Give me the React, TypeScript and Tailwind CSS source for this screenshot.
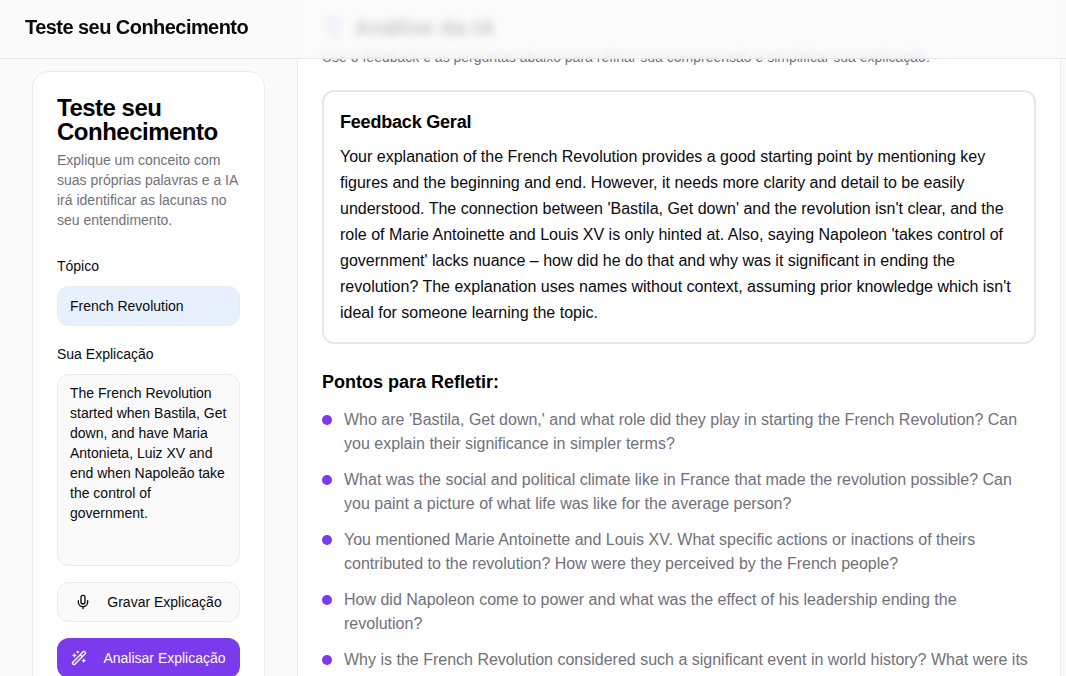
import { Lightbulb, Mic, WandSparkles } from "lucide-react";

const points = [
  "Who are 'Bastila, Get down,' and what role did they play in starting the French Revolution? Can you explain their significance in simpler terms?",
  "What was the social and political climate like in France that made the revolution possible? Can you paint a picture of what life was like for the average person?",
  "You mentioned Marie Antoinette and Louis XV. What specific actions or inactions of theirs contributed to the revolution? How were they perceived by the French people?",
  "How did Napoleon come to power and what was the effect of his leadership ending the revolution?",
  "Why is the French Revolution considered such a significant event in world history? What were its",
];

export default function App() {
  return (
    <div className="relative flex h-[676px] w-full overflow-hidden bg-[#fafafa] font-['Liberation_Sans',Arial,sans-serif] text-[#0a0a0f]">
      <header className="absolute inset-x-0 top-0 z-10 flex h-[59px] items-center border-b border-[#e8e8ea] bg-[#fafafa]/80 px-[25px] pb-[5px] backdrop-blur-[4px]">
        <h1 className="text-xl font-bold tracking-[-0.55px]">Teste seu Conhecimento</h1>
      </header>

      <aside className="w-[297px] shrink-0 pl-8 pr-8 pt-[71px]">
        <div className="h-[640px] rounded-2xl border border-[#ebebee] bg-white px-6 pt-6">
          <h2 className="text-2xl leading-6 font-bold tracking-[-0.5px] text-black">Teste seu Conhecimento</h2>
          <p className="mt-[6px] text-sm leading-5 text-[#71717a]">
            Explique um conceito com suas próprias palavras e a IA irá identificar as lacunas no seu entendimento.
          </p>
          <label className="mt-[26px] block text-sm leading-5">Tópico</label>
          <input
            readOnly
            value="French Revolution"
            className="mt-[10px] h-10 w-full rounded-xl border border-[#ebebee] bg-[#e8f0fe] px-3 text-sm outline-none"
          />
          <label className="mt-[18px] block text-sm leading-5">Sua Explicação</label>
          <textarea
            readOnly
            defaultValue="The French Revolution started when Bastila, Get down, and have Maria Antonieta, Luiz XV and end when Napoleão take the control of government."
            className="mt-[10px] block h-[192px] w-full resize-none rounded-xl border border-[#ebebee] bg-[#fafafa] px-3 py-2 text-sm leading-5 outline-none"
          />
          <button className="mt-4 flex h-10 w-full items-center justify-center gap-4 rounded-xl border border-[#ebebee] bg-[#fafafa] text-sm">
            <Mic size={16} strokeWidth={2} />
            Gravar Explicação
          </button>
          <button className="mt-4 flex h-10 w-full items-center justify-center gap-4 rounded-xl bg-[#7c3aed] text-sm text-[#fafafa]">
            <WandSparkles size={16} strokeWidth={2} />
            Analisar Explicação
          </button>
        </div>
      </aside>

      <main className="w-[764px] shrink-0 border-x border-[#ebebee] bg-white px-6 pt-3">
        <div className="flex h-8 items-center gap-2">
          <Lightbulb size={24} className="text-[#7c3aed]" />
          <h2 className="text-[22.5px] font-bold text-black">Análise da IA</h2>
        </div>
        <p className="mt-[3px] text-sm leading-5 text-[#71717a]">
          Use o feedback e as perguntas abaixo para refinar sua compreensão e simplificar sua explicação.
        </p>

        <section className="mt-[23px] rounded-xl border-2 border-[#e5e7eb] bg-white p-4">
          <h3 className="text-lg leading-7 font-bold tracking-[-0.2px] text-black">Feedback Geral</h3>
          <p className="mt-2 text-base leading-[26px]">
            Your explanation of the French Revolution provides a good starting point by mentioning key figures and the beginning and end. However, it needs more clarity and detail to be easily understood. The connection between 'Bastila, Get down' and the revolution isn't clear, and the role of Marie Antoinette and Louis XV is only hinted at. Also, saying Napoleon 'takes control of government' lacks nuance – how did he do that and why was it significant in ending the revolution? The explanation uses names without context, assuming prior knowledge which isn't ideal for someone learning the topic.
          </p>
        </section>

        <h3 className="mt-6 text-lg leading-7 font-bold text-black">Pontos para Refletir:</h3>
        <ul className="mt-3 flex flex-col gap-3">
          {points.map((p) => (
            <li key={p} className="flex items-start gap-3">
              <span className="mt-[7px] h-2.5 w-2.5 shrink-0 rounded-full bg-[#7c3aed]" />
              <span className="text-base leading-6 text-[#71717a]">{p}</span>
            </li>
          ))}
        </ul>
      </main>
    </div>
  );
}
